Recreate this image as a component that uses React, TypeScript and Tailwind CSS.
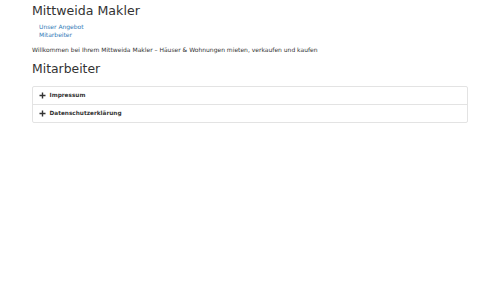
function Plus() {
  return (
    <svg width="7" height="7" viewBox="0 0 7 7" className="shrink-0">
      <path d="M3.5 0.5v6M0.5 3.5h6" stroke="#333" strokeWidth="1.4" />
    </svg>
  );
}

export default function App() {
  return (
    <div className="w-[500px] h-[300px] bg-white text-[#333] font-['DejaVu_Sans',Verdana,sans-serif]">
      <div className="flex flex-col px-[32px] pt-[3px]">
        <h1 className="text-[12.6px] leading-[16px] text-[#333]">Mittweida Makler</h1>
        <ul className="mt-[4px] flex flex-col pl-[7px] text-[6px] leading-[8px] text-[#337ab7]">
          <li>Unser Angebot</li>
          <li>Mitarbeiter</li>
        </ul>
        <p className="mt-[6px] text-[6px] leading-[9px] text-[#333]">
          Willkommen bei Ihrem Mittweida Makler – Häuser &amp; Wohnungen mieten, verkaufen und kaufen
        </p>
        <h2 className="mt-[7px] text-[12.4px] leading-[16px] text-[#333]">Mitarbeiter</h2>
        <div className="mt-[9px] flex w-[436px] flex-col rounded-[2px] border border-[#e3e3e3]">
          <div className="flex h-[18px] items-center gap-[3.5px] border-b border-[#e3e3e3] pl-[6px] text-[5.75px] font-bold">
            <Plus />
            <span>Impressum</span>
          </div>
          <div className="flex h-[17px] items-center gap-[3.5px] pl-[6px] text-[5.75px] font-bold">
            <Plus />
            <span>Datenschutzerklärung</span>
          </div>
        </div>
      </div>
    </div>
  );
}
